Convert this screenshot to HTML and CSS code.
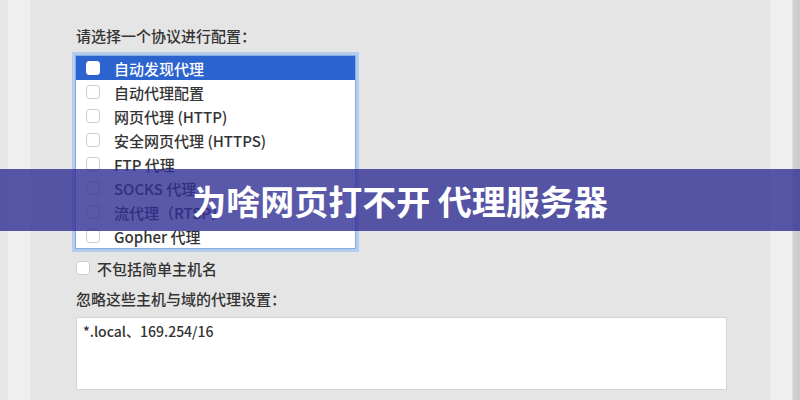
FILE: index.html
```html
<!DOCTYPE html>
<html lang="zh-CN">

<head>
    <meta charset="UTF-8">
    <meta name="viewport" content="width=device-width, initial-scale=1.0">
    <title>代理设置</title>
    <link rel="stylesheet" href="styles.css">
</head>

<body>
    <div class="window flex">
        <div class="side-left"></div>
        <div class="panel">
            <p class="label">请选择一个协议进行配置：</p>
            <ul class="proto-list">
                <li class="row selected"><span class="box"></span>自动发现代理</li>
                <li class="row"><span class="box"></span>自动代理配置</li>
                <li class="row"><span class="box"></span>网页代理 (HTTP)</li>
                <li class="row"><span class="box"></span>安全网页代理 (HTTPS)</li>
                <li class="row"><span class="box"></span>FTP 代理</li>
                <li class="row"><span class="box"></span>SOCKS 代理</li>
                <li class="row"><span class="box"></span>流代理（RTSP）</li>
                <li class="row"><span class="box"></span>Gopher 代理</li>
            </ul>
            <div class="simple-host flex-start">
                <span class="box"></span>
                <span>不包括简单主机名</span>
            </div>
            <p class="label mt-11">忽略这些主机与域的代理设置：</p>
            <div class="bypass">*.local、169.254/16</div>
        </div>
        <div class="side-right"></div>
    </div>

    <div class="banner">为啥网页打不开 代理服务器</div>
</body>

</html>
```

FILE: styles.css
```css
* {
    padding: 0;
    margin: 0;
    box-sizing: border-box;
    font-family: "Noto Sans CJK SC", "Liberation Sans", sans-serif;
}

body {
    width: 800px;
    height: 400px;
    overflow: hidden;
    background-color: #e5e5e5;
    color: #333;
    font-size: 15px;
    font-weight: 500;
}

ul {
    list-style: none;
}

.flex {
    display: flex;
}

.flex-start {
    display: flex;
    align-items: center;
}

.mt-11 {
    margin-top: 11px;
}

.window {
    height: 400px;
}

.side-left {
    width: 32px;
    background: linear-gradient(to right, #e7e7e7 0, #e7e7e7 8px, #efefef 8px, #efefef 30px, #e0e0e0 32px);
}

.side-right {
    width: 30px;
    background: linear-gradient(to right, #ebebeb 0, #efefef 2px, #efefef 22px, #d2d2d2 23px, #cbcbcb 30px);
}

.panel {
    flex: 1;
    padding: 26px 0 0 44px;
}

.label {
    line-height: 20px;
}

.proto-list {
    width: 281px;
    margin: 9px 0 0 -1px;
    background-color: #fff;
    border: 1px solid #86ace4;
    box-shadow: 0 0 0 3px #b4cdef;
}

.row {
    display: flex;
    align-items: center;
    height: 24px;
    padding-left: 10px;
    gap: 14px;
}

.row.selected {
    background-color: #2b63cf;
    color: #fff;
}

.box {
    width: 14px;
    height: 14px;
    border: 1px solid #cdcdcd;
    border-radius: 3px;
    background-color: #fff;
}

.row.selected .box {
    border-color: #fff;
}

.simple-host {
    height: 20px;
    margin-top: 9px;
    gap: 7px;
}

.bypass {
    width: 651px;
    height: 73px;
    margin-top: 8px;
    padding: 3px 6px;
    background-color: #fff;
    border: 1px solid #d6d6d6;
    font-size: 14px;
    line-height: 20px;
}

.banner {
    position: absolute;
    top: 169px;
    left: 0;
    width: 800px;
    height: 62px;
    display: flex;
    justify-content: center;
    align-items: center;
    background-color: rgba(48, 46, 148, 0.8);
    color: #fff;
    font-size: 34px;
    font-weight: bold;
}
```
